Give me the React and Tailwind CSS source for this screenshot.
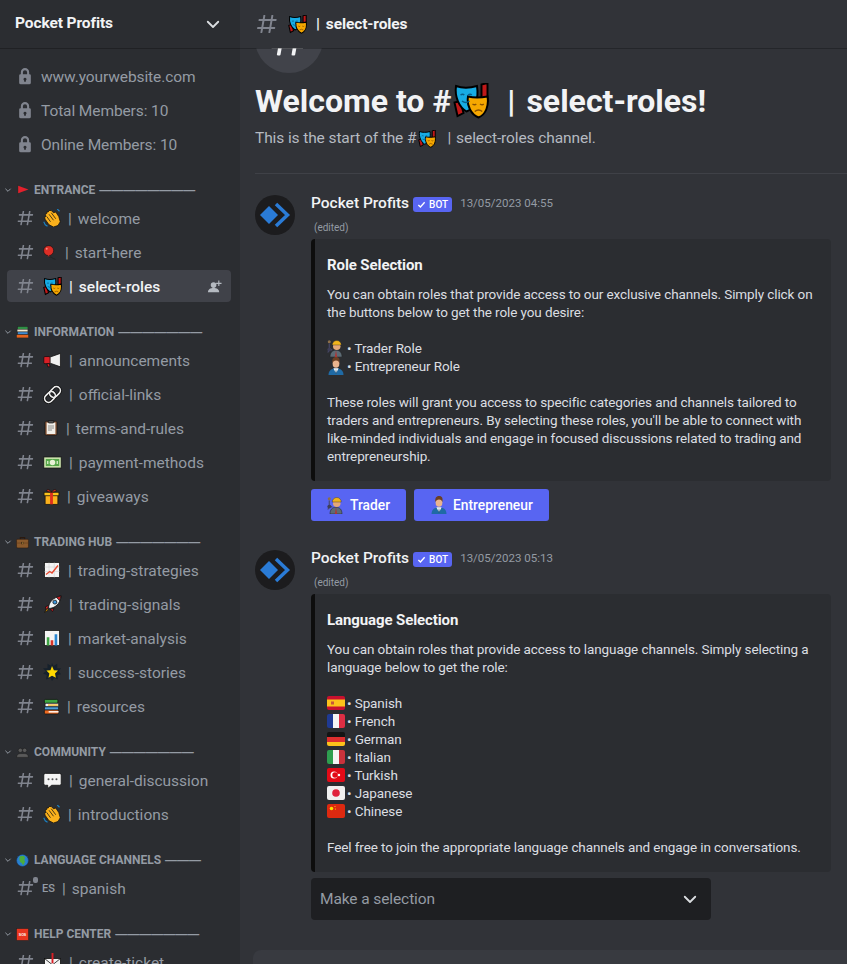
import React from "react";

const HASH =
  "M5.88657 21C5.57547 21 5.3399 20.7189 5.39427 20.4126L6.00001 17H2.59511C2.28449 17 2.04905 16.7198 2.10259 16.4138L2.27759 15.4138C2.31946 15.1746 2.52722 15 2.77011 15H6.35001L7.41001 9H4.00511C3.69449 9 3.45905 8.71977 3.51259 8.41381L3.68759 7.41381C3.72946 7.17456 3.93722 7 4.18011 7H7.76001L8.39677 3.41262C8.43914 3.17391 8.64664 3 8.88907 3H9.87344C10.1845 3 10.4201 3.28107 10.3657 3.58738L9.76001 7H15.76L16.3968 3.41262C16.4391 3.17391 16.6466 3 16.8891 3H17.8734C18.1845 3 18.4201 3.28107 18.3657 3.58738L17.76 7H21.1649C21.4755 7 21.711 7.28023 21.6574 7.58619L21.4824 8.58619C21.4406 8.82544 21.2328 9 20.9899 9H17.41L16.35 15H19.7549C20.0655 15 20.301 15.2802 20.2474 15.5862L20.0724 16.5862C20.0306 16.8254 19.8228 17 19.5799 17H16L15.3632 20.5874C15.3209 20.8261 15.1134 21 14.8709 21H13.8866C13.5755 21 13.3399 20.7189 13.3943 20.4126L14 17H8.00001L7.36325 20.5874C7.32088 20.8261 7.11337 21 6.87094 21H5.88657ZM9.41045 9L8.35045 15H14.3504L15.4104 9H9.41045Z";

const Hash = ({ className = "w-5 h-5", fill = "#80848e" }) => (
  <svg viewBox="0 0 24 24" className={className} fill={fill}>
    <path fillRule="evenodd" d={HASH} />
  </svg>
);

const Lock = () => (
  <svg viewBox="0 0 24 24" className="w-5 h-5" fill="#80848e">
    <path d="M17 10V7.5a5 5 0 0 0-10 0V10H6.5A1.5 1.5 0 0 0 5 11.5V20a2 2 0 0 0 2 2h10a2 2 0 0 0 2-2v-8.500A1.500 1.500 0 0 0 17.500 10H17ZM9.500 10V7.500a2.500 2.500 0 0 1 5 0V10h-5Zm2.500 4a1.800 1.800 0 0 1 1 3.300V19h-2v-1.700a1.800 1.800 0 0 1 1-3.300Z" fillRule="evenodd" />
  </svg>
);

const Chevron = ({ className, color = "#dbdee1", width = 2.4 }) => (
  <svg viewBox="0 0 24 24" className={className} fill="none" stroke={color} strokeWidth={width} strokeLinecap="round" strokeLinejoin="round">
    <path d="M5 9l7 7 7-7" />
  </svg>
);

// hand drawn versions of the emoji, no emoji font is available
const EMOJI = {
  clap: (
    <g stroke="#111" strokeWidth="1">
      <path d="M8 2l3 0 3 3 3-1 4 6 2 7-3 5-6 2-6-3-5-7-1-3 2-1-1-3 2-1 0-2 2 0z" fill="#fbb11c" />
      <path d="M8 7l6 8M11 5l6 8M5 10l5 7" fill="none" />
      <path d="M1 17l2 4 3 2M19 0l3 3" stroke="#1b82c4" strokeWidth="1.500" fill="none" />
    </g>
  ),
  balloon: (
    <g>
      <circle cx="9" cy="9" r="8" fill="#dd2e26" stroke="#111" />
      <circle cx="6" cy="6" r="1.500" fill="#f78f80" />
      <path d="M9 17c0 4 3 1 5 3s4 2 6 3" fill="none" stroke="#222" strokeWidth="1.500" />
      <path d="M9 16l-2 2h4z" fill="#dd2e26" />
    </g>
  ),
  masks: (
    <g stroke="#000" strokeWidth="1.300">
      <path d="M1 13l2 9 4-2-2-8zM19 1l4-1v12h-4z" fill="#c01818" />
      <path d="M2 2c4 1.500 9 1.500 14 0 1 7 0 14-7 17C4 16 1 9 2 2z" fill="#17ace4" />
      <path d="M10 9c4 1 8 1 13 0 1 6-1 12-6 14-5-2-8-8-7-14z" fill="#f6a800" />
      <path d="M5 8q1.500-1 2.500 0M10 8q1.500-1 2.500 0M6 12q2.500 2 5 0" fill="none" stroke="#0a5f8a" strokeWidth="1" />
      <path d="M13 14q1.500 1 2.500 0M18 14q1.500 1 2.500 0M14.500 19q2.500-2 5 0" fill="none" stroke="#8a5200" strokeWidth="1" />
    </g>
  ),
  megaphone: (
    <g stroke="#111" strokeWidth="1">
      <path d="M8 8l14-5v17L8 15z" fill="#f1f1f1" />
      <rect x="1" y="7" width="8" height="9" rx="1.500" fill="#d91f26" />
      <path d="M5 16l1 4h3l-1-4z" fill="#d91f26" />
    </g>
  ),
  link: (
    <g fill="none" transform="rotate(-45 12 12)">
      <rect x="0" y="7" width="15" height="10" rx="5" stroke="#111" strokeWidth="4" />
      <rect x="9" y="7" width="15" height="10" rx="5" stroke="#111" strokeWidth="4" />
      <rect x="0" y="7" width="15" height="10" rx="5" stroke="#eee" strokeWidth="2" />
      <rect x="9" y="7" width="15" height="10" rx="5" stroke="#eee" strokeWidth="2" />
    </g>
  ),
  clipboard: (
    <g stroke="#111" strokeWidth="1">
      <rect x="3" y="2" width="18" height="21" rx="2" fill="#8a5a3c" />
      <rect x="5.500" y="4" width="13" height="17" fill="#f1eee8" stroke="none" />
      <rect x="8" y="1" width="8" height="3.500" rx="1" fill="#555" />
      <path d="M7.500 9h9M7.500 12h9M7.500 15h6" stroke="#777" strokeWidth="1.200" />
    </g>
  ),
  money: (
    <g stroke="#111" strokeWidth="1">
      <rect x="1" y="5" width="22" height="14" fill="#cfe6b0" />
      <rect x="3.500" y="7.500" width="17" height="9" fill="#57a84a" stroke="none" />
      <circle cx="12" cy="12" r="3.500" fill="#e8f3d6" stroke="none" />
      <path d="M6 10v4M18 10v4" stroke="#e8f3d6" strokeWidth="1.500" />
    </g>
  ),
  gift: (
    <g stroke="#111" strokeWidth="1">
      <rect x="3" y="10" width="18" height="13" fill="#fbb11c" />
      <rect x="1.500" y="6" width="21" height="5" fill="#fcc21b" />
      <rect x="10" y="6" width="4" height="17" fill="#e0301e" stroke="none" />
      <path d="M12 6C9 1 4 1 6 5zM12 6c3-5 8-5 6-1z" fill="#e0301e" />
    </g>
  ),
  chart: (
    <g stroke="#111" strokeWidth="1">
      <rect x="2" y="2" width="20" height="20" fill="#f4f4f4" />
      <path d="M2 8h20M2 14h20M8 2v20M15 2v20" stroke="#ccc" strokeWidth=".700" />
      <path d="M4 18l5-4 3 2 8-10" fill="none" stroke="#e8492f" strokeWidth="1.800" />
    </g>
  ),
  rocket: (
    <g stroke="#111" strokeWidth="1">
      <path d="M3 15l4-2-1 5-2 2z" fill="#d91f26" />
      <path d="M12 21l2-4-5 1z" fill="#d91f26" />
      <path d="M2 22l3-5 2 2z" fill="#f6a800" />
      <path d="M7 17c0-8 6-14 16-16-1 10-8 16-16 16z" fill="#f0f3f5" />
      <path d="M17 3l6-2-2 6z" fill="#d91f26" />
      <circle cx="15" cy="9" r="2.500" fill="#3a96dd" />
    </g>
  ),
  bars: (
    <g stroke="#111" strokeWidth="1">
      <rect x="2" y="2" width="20" height="20" fill="#f4f4f4" />
      <rect x="5" y="11" width="3.500" height="11" fill="#3ea544" stroke="none" />
      <rect x="10.200" y="15" width="3.500" height="7" fill="#d9352a" stroke="none" />
      <rect x="15.500" y="7" width="3.500" height="15" fill="#2a86d1" stroke="none" />
    </g>
  ),
  star: (
    <g>
      <path d="M12 0l2 4 5-3 0 6 5 0-3 4 3 4-5 1 1 6-5-2-3 4-2-4-6 2 1-6-5-2 4-3-4-4 6 0 0-6 5 3z" fill="#16212c" />
      <path d="M12 4l2.500 5.500 5.500.5-4 4 1.200 5.500L12 17l-4.700 2.500L8.500 14l-4-4 5.500-.5z" fill="#ffd900" />
    </g>
  ),
  books: (
    <g stroke="#111" strokeWidth="1">
      <rect x="2" y="2" width="19" height="5.500" rx="1.500" fill="#3da642" />
      <rect x="3" y="7.500" width="19" height="5" rx="1.500" fill="#f5f5f5" />
      <path d="M7 10h14" stroke="#f2b430" strokeWidth="2" />
      <rect x="2" y="12.500" width="20" height="4.500" rx="1.500" fill="#4f9ed8" />
      <rect x="2" y="17" width="20" height="5.500" rx="1.500" fill="#ee6a20" />
      <path d="M8 19.500h14" stroke="#fff" strokeWidth="2" />
    </g>
  ),
  speech: (
    <g>
      <path d="M3 3h18a2 2 0 0 1 2 2v11a2 2 0 0 1-2 2H11l-5 4v-4H3a2 2 0 0 1-2-2V5a2 2 0 0 1 2-2z" fill="#f5f5f5" stroke="#111" />
      <circle cx="7" cy="10.500" r="1.300" fill="#555" />
      <circle cx="12" cy="10.500" r="1.300" fill="#555" />
      <circle cx="17" cy="10.500" r="1.300" fill="#555" />
    </g>
  ),
  people: (
    <g fill="#5a5a5a" stroke="#1a1a1a" strokeWidth="1">
      <circle cx="8" cy="8" r="4" />
      <circle cx="16" cy="8" r="4" />
      <path d="M1 21c0-5 3-7 7-7h8c4 0 7 2 7 7z" />
    </g>
  ),
  globe: (
    <g>
      <circle cx="12" cy="12" r="11" fill="#2a7fd0" stroke="#14365c" />
      <path d="M7 4l7-1 3 4-2 4 2 3-4 7-2-4-3-2-2-5z" fill="#4cae3d" />
    </g>
  ),
  sos: (
    <g>
      <rect x="1" y="1" width="22" height="22" fill="#e8351f" stroke="#222" />
      <text x="12" y="14" textAnchor="middle" fontSize="6.500" fontWeight="700" fill="#fff" fontFamily="Liberation Sans, sans-serif">SOS</text>
    </g>
  ),
  briefcase: (
    <g stroke="#2a1a10" strokeWidth="1">
      <path d="M8 7V3h8v4" fill="none" strokeWidth="2" />
      <rect x="1" y="6" width="22" height="16" rx="2" fill="#8a5a2c" />
      <path d="M1 13h22" stroke="#5e3a1a" />
      <rect x="10" y="11.500" width="4" height="3" fill="#e3b04a" />
    </g>
  ),
  redflag: (
    <g>
      <rect x="2" y="0" width="2" height="24" fill="#2c2c2c" />
      <path d="M4 3l19 7-19 7z" fill="#e3202c" />
    </g>
  ),
  books2: (
    <g stroke="#222" strokeWidth=".800">
      <rect x="3" y="1" width="19" height="5" fill="#2f8f45" />
      <rect x="2" y="6" width="20" height="5" fill="#f2e9cf" />
      <rect x="3" y="11" width="19" height="5" fill="#3f8bd0" />
      <rect x="1" y="16" width="22" height="6" fill="#e5641c" />
    </g>
  ),
  ticket: (
    <g stroke="#111" strokeWidth="1">
      <rect x="2" y="7" width="20" height="15" fill="#f4f4f4" />
      <path d="M2 7l10 8 10-8" fill="none" />
      <rect x="10.800" y="0" width="2.400" height="13" fill="#d91f26" stroke="none" />
    </g>
  ),
  trader: (
    <g>
      <path d="M4 24c0-6 3-9 8-9s8 3 8 9z" fill="#5d6b75" stroke="#222" strokeWidth=".700" />
      <path d="M12 15l-1.500 9h3z" fill="#b03434" />
      <circle cx="13" cy="9.500" r="5" fill="#e4a878" />
      <path d="M7 8a6 6 0 0 1 12 0z" fill="#f0b41c" stroke="#222" strokeWidth=".500" />
      <circle cx="3" cy="3.500" r="2" fill="#8c6f4a" />
      <path d="M1 18l3-5 3 2M3 6v6" stroke="#4a4a6a" strokeWidth="1.500" fill="none" />
      <circle cx="3" cy="14" r="2.500" fill="#3e3e58" />
    </g>
  ),
  entrepreneur: (
    <g>
      <path d="M2 24c0-6 4-9 10-9s10 3 10 9z" fill="#1f6aa5" />
      <path d="M8.500 15l3.500 7 3.500-7z" fill="#f4f4f4" />
      <path d="M12 16l-1 6h2z" fill="#16476f" />
      <ellipse cx="12" cy="8.500" rx="4.500" ry="5.800" fill="#eab48e" />
      <path d="M7.200 8c-1-6 2-8 5-8s5.500 2 4.300 8c-1-2.500-2-3.500-4.500-3.500S8.200 6 7.200 8z" fill="#6b3f24" />
    </g>
  ),
};

const Emoji = ({ name, size = 20, className = "" }) => (
  <svg viewBox="0 0 24 24" width={size} height={size} className={"shrink-0 " + className}>
    {EMOJI[name]}
  </svg>
);

const Flag = ({ children }) => (
  <svg viewBox="0 0 18 14" className="w-[18px] h-[14px] shrink-0 rounded-[2px]">
    {children}
  </svg>
);

const FLAGS = {
  Spanish: (
    <>
      <rect width="18" height="14" fill="#c8102e" />
      <rect y="3.500" width="18" height="7" fill="#fcc21b" />
      <rect x="4" y="5.500" width="3" height="3" fill="#c8553a" />
    </>
  ),
  French: (
    <>
      <rect width="6" height="14" fill="#1f3a93" />
      <rect x="6" width="6" height="14" fill="#f4f4f4" />
      <rect x="12" width="6" height="14" fill="#dd2e44" />
    </>
  ),
  German: (
    <>
      <rect width="18" height="5" fill="#141414" />
      <rect y="5" width="18" height="5" fill="#dd2e2e" />
      <rect y="10" width="18" height="4" fill="#fcc21b" />
    </>
  ),
  Italian: (
    <>
      <rect width="6" height="14" fill="#2e9e4f" />
      <rect x="6" width="6" height="14" fill="#f4f4f4" />
      <rect x="12" width="6" height="14" fill="#c8323c" />
    </>
  ),
  Turkish: (
    <>
      <rect width="18" height="14" fill="#e30a17" />
      <circle cx="7" cy="7" r="3.500" fill="#fff" />
      <circle cx="8" cy="7" r="2.700" fill="#e30a17" />
      <circle cx="12" cy="7" r="1.200" fill="#fff" />
    </>
  ),
  Japanese: (
    <>
      <rect width="18" height="14" fill="#f0f0f0" />
      <circle cx="9" cy="7" r="3.800" fill="#e0223c" />
    </>
  ),
  Chinese: (
    <>
      <rect width="18" height="14" fill="#de2910" />
      <circle cx="4.500" cy="4.500" r="1.800" fill="#ffde00" />
      <circle cx="8" cy="2.500" r=".600" fill="#ffde00" />
      <circle cx="8.500" cy="5" r=".600" fill="#ffde00" />
    </>
  ),
};

const channels = [
  {
    label: "ENTRANCE",
    icon: "redflag",
    dash: "————————",
    items: [
      { e: "clap", name: "welcome", w: 18 },
      { e: "balloon", name: "start-here", w: 15 },
      { e: "masks", name: "select-roles", w: 19, active: true },
    ],
  },
  {
    label: "INFORMATION",
    icon: "books2",
    dash: "———————",
    items: [
      { e: "megaphone", name: "announcements", w: 19 },
      { e: "link", name: "official-links", w: 19 },
      { e: "clipboard", name: "terms-and-rules", w: 16 },
      { e: "money", name: "payment-methods", w: 19 },
      { e: "gift", name: "giveaways", w: 17 },
    ],
  },
  {
    label: "TRADING HUB",
    icon: "briefcase",
    dash: "———————",
    items: [
      { e: "chart", name: "trading-strategies", w: 18 },
      { e: "rocket", name: "trading-signals", w: 19 },
      { e: "bars", name: "market-analysis", w: 18 },
      { e: "star", name: "success-stories", w: 18 },
      { e: "books", name: "resources", w: 17 },
    ],
  },
  {
    label: "COMMUNITY",
    icon: "people",
    dash: "———————",
    items: [
      { e: "speech", name: "general-discussion", w: 19 },
      { e: "clap", name: "introductions", w: 18 },
    ],
  },
  {
    label: "LANGUAGE CHANNELS",
    icon: "globe",
    dash: "———",
    items: [{ code: "ES", name: "spanish", locked: true }],
  },
  {
    label: "HELP CENTER",
    icon: "sos",
    dash: "———————",
    items: [{ e: "ticket", name: "create-ticket", w: 19 }],
  },
];

const ChannelRow = ({ item }) => (
  <div
    className={
      "h-8 mb-[2px] ml-[7px] mr-[9px] pl-[10px] pr-[9px] rounded flex items-center tracking-normal " +
      (item.active ? "bg-[#404249] text-[#f2f3f5] font-medium" : "text-[#949ba4]")
    }
  >
    <div className="relative w-[18px] h-5 shrink-0 flex items-center">
      <Hash className="w-5 h-5 -ml-[1px]" />
      {item.locked && <span className="absolute -top-[1px] right-[-3px] w-[5px] h-[6px] bg-[#80848e] rounded-[2px]" />}
    </div>
    {item.e ? (
      <span className="ml-2 shrink-0 flex justify-start" style={{ width: item.w }}>
        <Emoji name={item.e} size={item.w} />
      </span>
    ) : (
      <span className="ml-[7px] pt-[3px] text-[11px] font-medium">{item.code}</span>
    )}
    <span className="ml-[7px] pt-[3px] whitespace-nowrap">|</span>
    <span className="ml-[6px] pt-[3px] whitespace-nowrap">{item.name}</span>
    {item.active && (
      <svg viewBox="0 0 16 16" className="ml-auto w-[15px] h-[15px]" fill="#b5bac1">
        <circle cx="7" cy="6.500" r="3" />
        <path d="M1 14c0-3 2.500-4.500 6-4.500s6 1.500 6 4.500z" />
        <path d="M12 1.500h1.200V4h2.300v1.200h-2.300v2.300H12V5.200H9.700V4H12z" />
      </svg>
    )}
  </div>
);

const Sidebar = () => (
  <aside className="w-[240px] shrink-0 h-full bg-[#2b2d31] flex flex-col overflow-hidden">
    <div className="h-12 shrink-0 pl-[15px] pr-[18px] flex items-center justify-between shadow-[0_1px_0_rgba(0,0,0,0.25)]">
      <span className="font-bold text-[#f2f3f5]">Pocket Profits</span>
      <Chevron className="w-[18px] h-[18px]" />
    </div>
    <div className="pt-3">
      {["www.yourwebsite.com", "Total Members: 10", "Online Members: 10"].map((t) => (
        <div key={t} className="h-8 mb-[2px] pl-[15px] flex items-center text-[#949ba4]">
          <Lock />
          <span className="ml-[6px] pt-[3px] whitespace-nowrap">{t}</span>
        </div>
      ))}
      {channels.map((cat) => (
        <div key={cat.label}>
          <div className="h-10 pt-4 flex items-center pl-[4px]">
            <Chevron className="w-[8px] h-[8px]" color="#949ba4" width={3} />
            <Emoji name={cat.icon} size={13} className="ml-[4px]" />
            <span className="ml-[5px] text-[12px] tracking-normal font-bold text-[#949ba4] whitespace-nowrap">{cat.label}</span>
            <span className="ml-[4px] text-[12px] tracking-normal font-bold font-['Liberation_Sans',sans-serif] text-[#949ba4] whitespace-nowrap">{cat.dash}</span>
          </div>
          {cat.items.map((item) => (
            <ChannelRow key={item.name} item={item} />
          ))}
        </div>
      ))}
    </div>
  </aside>
);

const Avatar = () => (
  <svg viewBox="0 0 40 40" className="w-10 h-10 shrink-0">
    <circle cx="20" cy="20" r="20" fill="#1c1c1e" />
    <path d="M14 11l9 9-9 9-9-9z" fill="#2a7bd6" />
    <path d="M21 9l11.500 11L21 31" fill="none" stroke="#2a7bd6" strokeWidth="3.500" />
  </svg>
);

const BotTag = () => (
  <span className="ml-[4px] h-[15px] px-[4px] rounded-[3px] bg-[#5865f2] text-white text-[10px] tracking-normal font-medium inline-flex items-center gap-[3px]">
    <svg viewBox="0 0 10 10" className="w-[9px] h-[9px]" fill="none" stroke="#fff" strokeWidth="1.500">
      <path d="M1.500 5.500l2.300 2.300 4.700-5.300" />
    </svg>
    BOT
  </span>
);

const MessageHead = ({ time }) => (
  <>
    <div className="flex items-center h-[18px]">
      <span className="font-medium tracking-normal text-[#f2f3f5]">Pocket Profits</span>
      <BotTag />
      <span className="ml-2 text-[11.500px] tracking-normal text-[#949ba4]">{time}</span>
    </div>
    <div className="mt-[8px] ml-[3px] h-[14px] text-[10px] tracking-normal leading-[14px] text-[#949ba4]">(edited)</div>
  </>
);

const Embed = ({ title, children }) => (
  <div className="mt-[4px] w-[520px] bg-[#2b2d31] rounded border-l-4 border-[#0d0d0d] pl-3 pt-[16px] pb-[16px] text-[13.500px] leading-[18px] text-[#dbdee1]">
    <div className="text-[15px] leading-5 font-bold text-[#f2f3f5] mb-[10px]">{title}</div>
    {children}
  </div>
);

const RoleButton = ({ icon, label }) => (
  <button className="h-8 px-[16px] rounded-[3px] bg-[#5865f2] text-white text-[13.800px] tracking-normal font-medium flex items-center gap-[5px]">
    <Emoji name={icon} size={18} />
    {label}
  </button>
);

const Main = () => (
  <main className="flex-1 min-w-0 h-full bg-[#313338] flex flex-col overflow-hidden">
    <div className="h-12 shrink-0 pl-[16px] flex items-center shadow-[0_1px_0_rgba(0,0,0,0.25)] relative z-10 bg-[#313338]">
      <Hash className="w-6 h-6 -ml-[1px]" />
      <Emoji name="masks" size={19} className="ml-[9px]" />
      <span className="ml-[9px] pt-[2px] font-bold text-[#f2f3f5] whitespace-nowrap">|</span>
      <span className="ml-[6px] pt-[2px] font-bold text-[#f2f3f5] whitespace-nowrap">select-roles</span>
    </div>
    <div className="flex-1 pl-[15px] overflow-hidden">
      <div className="-mt-[43px] w-[68px] h-[68px] rounded-full bg-[#41434a] flex items-center justify-center">
        <Hash className="w-11 h-11" fill="#f2f3f5" />
      </div>
      <h1 className="mt-[8px] h-[40px] flex items-center text-[32px] tracking-normal font-bold text-[#f2f3f5] whitespace-nowrap">
        <span>Welcome to #</span>
        <Emoji name="masks" size={36} className="ml-[2px] mr-[18px]" />
        <span>|</span>
        <span className="ml-[11px]">select-roles!</span>
      </h1>
      <p className="mt-[5px] h-6 pt-[2px] text-[#b5bac1] flex items-center whitespace-nowrap">
        This is the start of the #
        <Emoji name="masks" size={18} className="mx-[2px]" />
        <span className="ml-[9px]">|</span>
        <span className="ml-[5px]">select-roles channel.</span>
      </p>
      <div className="mt-[23px] h-px bg-[#3f4147]" />

      <div className="mt-[21px] flex gap-4">
        <Avatar />
        <div className="min-w-0">
          <MessageHead time="13/05/2023 04:55" />
          <Embed title="Role Selection">
            <p className="whitespace-nowrap">
              You can obtain roles that provide access to our exclusive channels. Simply click on
              <br />
              the buttons below to get the role you desire:
            </p>
            <div className="mt-[18px] flex items-center gap-[2px] h-[18px]">
              <Emoji name="trader" size={18} /> • Trader Role
            </div>
            <div className="flex items-center gap-[2px] h-[18px]">
              <Emoji name="entrepreneur" size={18} /> • Entrepreneur Role
            </div>
            <p className="mt-[18px] whitespace-nowrap">
              These roles will grant you access to specific categories and channels tailored to
              <br />
              traders and entrepreneurs. By selecting these roles, you'll be able to connect with
              <br />
              like-minded individuals and engage in focused discussions related to trading and
              <br />
              entrepreneurship.
            </p>
          </Embed>
          <div className="mt-2 flex gap-2">
            <RoleButton icon="trader" label="Trader" />
            <RoleButton icon="entrepreneur" label="Entrepreneur" />
          </div>
        </div>
      </div>

      <div className="mt-[29px] flex gap-4">
        <Avatar />
        <div className="min-w-0">
          <MessageHead time="13/05/2023 05:13" />
          <Embed title="Language Selection">
            <p className="whitespace-nowrap">
              You can obtain roles that provide access to language channels. Simply selecting a
              <br />
              language below to get the role:
            </p>
            <div className="mt-[18px]">
              {Object.keys(FLAGS).map((lang) => (
                <div key={lang} className="flex items-center gap-[2px] h-[18px]">
                  <Flag>{FLAGS[lang]}</Flag> • {lang}
                </div>
              ))}
            </div>
            <p className="mt-[18px] whitespace-nowrap">
              Feel free to join the appropriate language channels and engage in conversations.
            </p>
          </Embed>
          <div className="mt-[6px] w-[400px] h-[42px] rounded bg-[#1e1f22] pl-[9px] pr-[12px] flex items-center justify-between text-[#949ba4]">
            <span className="pt-[2px]">Make a selection</span>
            <Chevron className="w-[18px] h-[18px]" />
          </div>
        </div>
      </div>
      <div className="mt-[30px] h-[44px] rounded-lg bg-[#383a40] -ml-[2px] -mr-4" />
    </div>
  </main>
);

export default function App() {
  return (
    <div className="w-[847px] h-[964px] flex overflow-hidden font-['Roboto',sans-serif] text-[15.500px] tracking-[-0.1px]">
      <Sidebar />
      <Main />
    </div>
  );
}
